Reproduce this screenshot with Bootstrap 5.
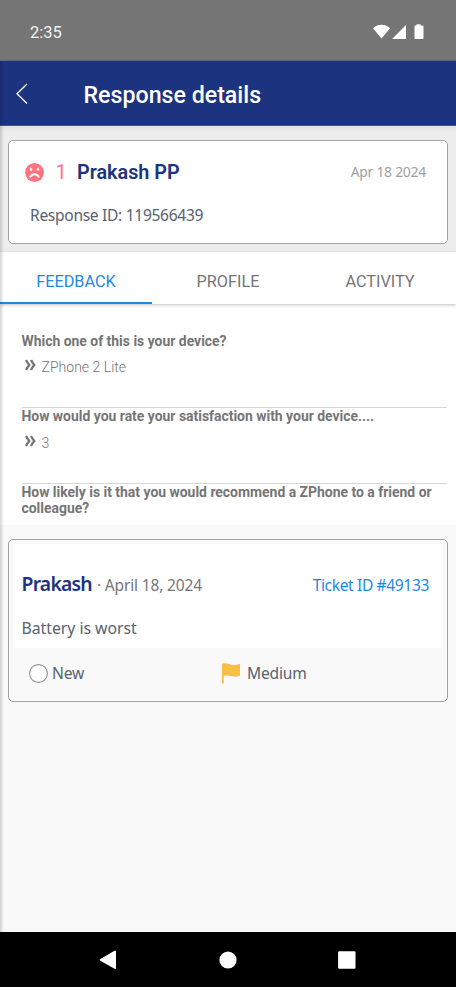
<!DOCTYPE html>
<html lang="en">
<head>
<meta charset="utf-8">
<meta name="viewport" content="width=device-width, initial-scale=1">
<title>Response details</title>
<link rel="stylesheet" href="https://cdn.jsdelivr.net/npm/bootstrap@5.3.0/dist/css/bootstrap.min.css">
<style>
body{font-family:Roboto,"Liberation Sans",sans-serif;background:#f9f9f9;color:#757575;width:456px;height:987px;overflow:hidden}
svg{display:block;flex:none}
.humanist{font-family:"Noto Sans",sans-serif}
.screen{height:987px}
.screen-edge{left:0;top:61px;width:4px;height:871px;background:linear-gradient(90deg,rgba(0,0,0,.16),rgba(0,0,0,0))}
.status-bar{height:61px;background:#757575;color:#f1f1f1;padding:3px 31px 0 30px;font-size:16.5px;border-bottom:1px solid #60677c}
.clock{padding-top:3px}
.app-bar{height:65px;background:#1c3380;color:#fff;padding:2px 15px 0;border-bottom:1px solid #45579a}
.app-title{font-size:23.2px;font-weight:500;line-height:28px;margin-left:54.5px;padding-top:2px}
.summary-zone{height:126px;background:linear-gradient(#e2e2e2,#ededed 6px);padding:13.5px 8px 8px}
.outlined{border:1.3px solid #a2a2a2;border-radius:5px}
.summary{height:104.5px;background:#fff;padding:17px 21px 0 16px}
.score{font-size:20px;color:#ff7380;font-weight:400;width:20px;margin-left:7px;text-align:center;line-height:28px}
.person{font-size:19.8px;font-weight:600;color:#1c3380;line-height:28px;margin-left:6px}
.summary .person{padding-top:1px}
.when{font-size:14px;letter-spacing:-.3px;color:#a0a0a0;line-height:28px}
.slate{color:#566270}
.response-id{font-size:15.6px;letter-spacing:-.32px;line-height:24px;margin:16px 0 0 5px}
.tabs{height:51.5px;background:#fff;box-shadow:0 1px 3px rgba(0,0,0,.25);z-index:1}
.tabs .nav-link{height:51.5px;padding:8px 0 0;line-height:44px;font-size:16.3px;color:#757575;border-radius:0}
.tabs .nav-link.active{color:#1e88e5;border-bottom:2.5px solid #1e88e5}
.feedback{height:221.5px;background:#fff;padding:29px 9px 0 21.5px}
.question{height:75.7px;border-bottom:1px solid #d6d6d6}
.question:last-child{border:0}
.ask{font-size:13.93px;font-weight:700;line-height:16.5px}
.answer{font-size:14.05px;font-weight:300;line-height:20px;margin-top:8px;gap:6px;padding-left:3px}
.answer svg{margin-top:-4px}
.ticket{margin:14px 8px 0;height:163px;padding:4px 5px}
.ticket-main{height:104px;background:#fff;padding:27px 13px 0 7.5px}
.ticket .person{margin:0;font-size:19.4px;letter-spacing:-.8px;line-height:26px}
.ticket-date{font-size:15.5px;letter-spacing:-.15px;line-height:26px;margin-left:5px}
.ticket-link{font-size:15.6px;letter-spacing:-.38px;line-height:26px;color:#1e88e5}
.comment{font-size:15.8px;letter-spacing:-.03px;line-height:24px;margin-top:18px}
.ticket-foot{height:50px;padding:1px 0 0 15px;font-size:15.6px;letter-spacing:-.2px}
.state{width:193px;gap:4px}
.priority{gap:7px}
.system-bar{height:55px;background:#000;padding:0 100px 0 99px}
</style>
<script src="https://cdn.jsdelivr.net/npm/bootstrap@5.3.0/dist/js/bootstrap.bundle.min.js"></script>
</head>
<body>
<div class="screen d-flex flex-column position-relative">
  <div class="screen-edge position-absolute z-3"></div>
  <div class="status-bar d-flex align-items-center justify-content-between">
    <span class="clock">2:35</span>
    <svg width="52" height="16" viewBox="0 0 52 16" fill="#fff"><path d="M0 4.200C5-.4 12-.4 17 4.200L8.500 14.500zM19 15L33 1V15zM43.500 1.500V.2h4v1.300h2q1 0 1 1V14q0 1-1 1h-7q-1 0-1-1V2.500q0-1 1-1z"/></svg>
  </div>
  <header class="app-bar d-flex align-items-center">
    <svg width="14" height="22" viewBox="0 0 14 22" fill="none" stroke="#fff" stroke-width="1.300"><path d="M12 1L2 10.700 12 20.500"/></svg>
    <h1 class="app-title mb-0">Response details</h1>
  </header>
  <section class="summary-zone">
    <div class="summary outlined">
      <div class="d-flex align-items-center">
        <svg width="19" height="19" viewBox="0 0 19 19"><circle cx="9.500" cy="9.500" r="9.400" fill="#ff7380"/><g fill="none" stroke="#fff" stroke-linecap="round"><path d="M5.300 4.900l1.300.8M13.700 4.900l-1.300.8" stroke-width=".9"/><path d="M5.400 13.600Q9.500 8.600 13.600 13.600" stroke-width="2.100"/></g><circle cx="6" cy="6.500" r="1.300" fill="#fff"/><circle cx="13" cy="6.500" r="1.300" fill="#fff"/></svg>
        <span class="score">1</span><span class="person">Prakash PP</span>
        <span class="when humanist ms-auto">Apr 18 2024</span>
      </div>
      <p class="response-id humanist slate mb-0">Response ID: 119566439</p>
    </div>
  </section>
  <nav class="tabs nav nav-fill position-relative">
    <a class="nav-link active col-4" href="#">FEEDBACK</a>
    <a class="nav-link col-4" href="#">PROFILE</a>
    <a class="nav-link col-4" href="#">ACTIVITY</a>
  </nav>
  <section class="feedback">
    <div class="question">
      <div class="ask">Which one of this is your device?</div>
      <div class="answer d-flex align-items-center"><svg width="11" height="12" viewBox="0 0 11 12" fill="none" stroke="#757575" stroke-width="2.300"><path d="M1 1Q2.500 4 4.300 6 2.500 8 1 11M6 1Q7.500 4 9.300 6 7.500 8 6 11"/></svg><span>ZPhone 2 Lite</span></div>
    </div>
    <div class="question">
      <div class="ask">How would you rate your satisfaction with your device....</div>
      <div class="answer d-flex align-items-center"><svg width="11" height="12" viewBox="0 0 11 12" fill="none" stroke="#757575" stroke-width="2.300"><path d="M1 1Q2.500 4 4.300 6 2.500 8 1 11M6 1Q7.500 4 9.300 6 7.500 8 6 11"/></svg><span>3</span></div>
    </div>
    <div class="question">
      <div class="ask">How likely is it that you would recommend a ZPhone to a friend or colleague?</div>
    </div>
  </section>
  <article class="ticket outlined humanist">
    <div class="ticket-main">
      <div class="d-flex align-items-baseline">
        <span class="person">Prakash</span><span class="ticket-date">· April 18, 2024</span>
        <a class="ticket-link ms-auto text-decoration-none" href="#">Ticket ID #49133</a>
      </div>
      <p class="comment slate mb-0">Battery is worst</p>
    </div>
    <div class="ticket-foot slate d-flex align-items-center">
      <span class="state d-flex align-items-center"><svg width="19" height="19" viewBox="0 0 19 19"><circle cx="9.500" cy="9.500" r="8.900" fill="#fff" stroke="#929292" stroke-width="1.100"/></svg>New</span>
      <span class="priority d-flex align-items-center"><svg width="18" height="21" viewBox="0 0 18 21" fill="#f6c042"><path d="M0 1.200Q.8.300 2 .3C6-.3 9 2.600 12 2.300Q15 2.200 18 .8V12.500C13 15.500 8 11.400 1.800 13V20.500H0z"/></svg>Medium</span>
    </div>
  </article>
  <footer class="system-bar d-flex align-items-center justify-content-between mt-auto">
    <svg width="18" height="20" viewBox="0 0 18 20" fill="#fff"><path d="M1 9.300L15.500.8q1.500-.5 1.500 1V18q0 1.300-1.500.8L1 10.500q-1-.6 0-1.200z"/></svg>
    <svg width="18" height="18" viewBox="0 0 18 18"><circle cx="9" cy="9" r="8.600" fill="#fff"/></svg>
    <svg width="18" height="18" viewBox="0 0 18 18"><rect x=".1" y=".3" width="17.400" height="17.400" rx="1" fill="#fff"/></svg>
  </footer>
</div>
</body>
</html>
